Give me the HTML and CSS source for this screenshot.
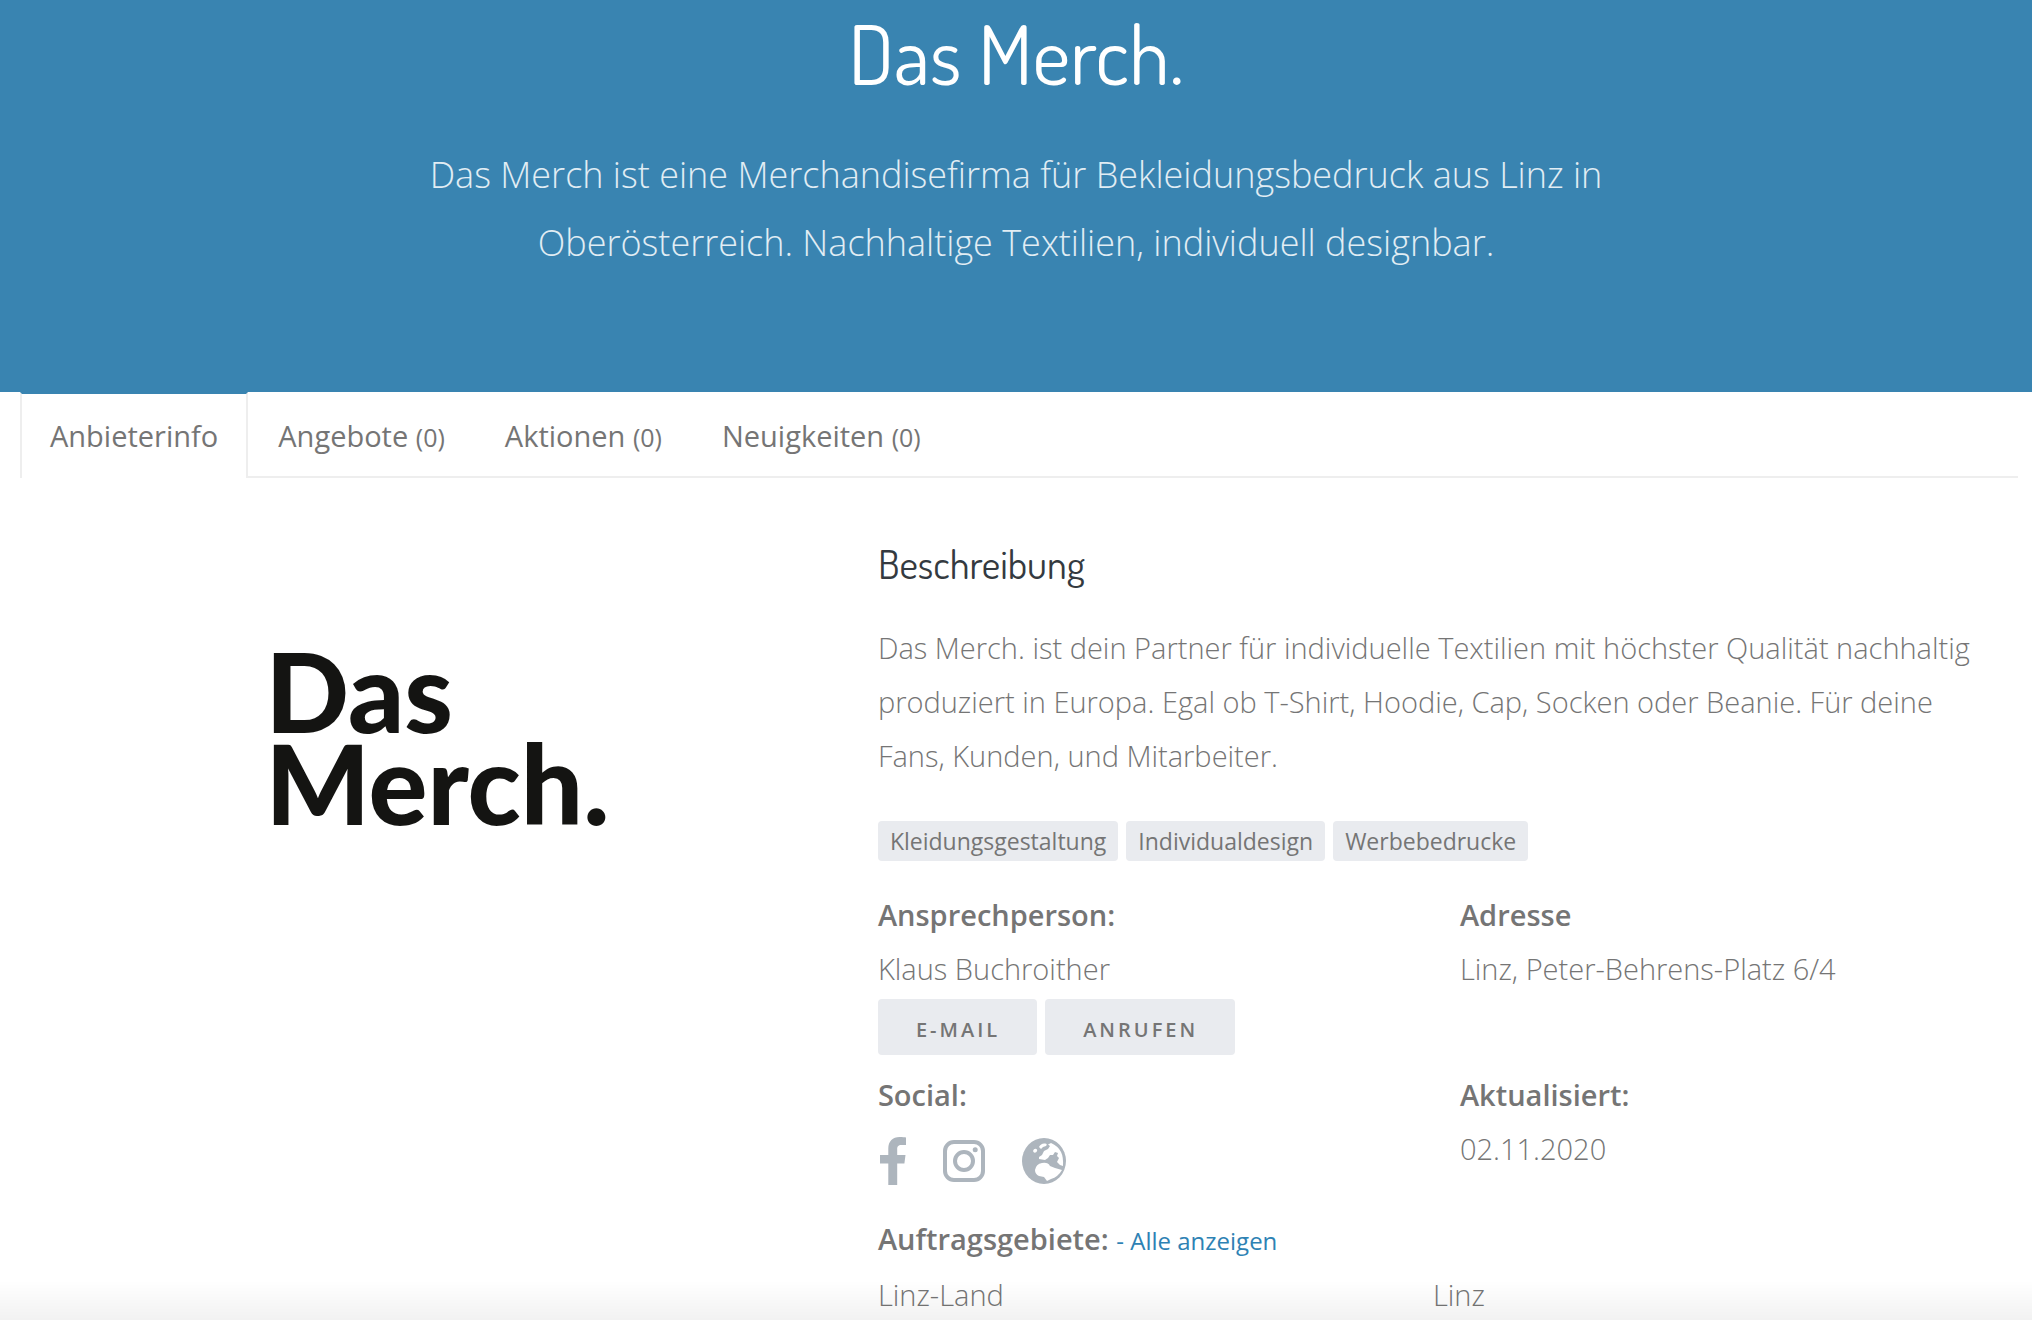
FILE: index.html
```html
<!DOCTYPE html>
<html lang="de">
<head>
  <meta charset="utf-8">
  <title>Das Merch.</title>
  <link rel="stylesheet" href="styles.css">
</head>
<body>
  <header class="hero">
    <h1>Das Merch.</h1>
    <p>Das Merch ist eine Merchandisefirma für Bekleidungsbedruck aus Linz in Oberösterreich. Nachhaltige Textilien, individuell designbar.</p>
  </header>

  <nav class="tabs">
    <a class="tab active" href="#info">Anbieterinfo</a>
    <a class="tab" href="#angebote">Angebote <small>(0)</small></a>
    <a class="tab" href="#aktionen">Aktionen <small>(0)</small></a>
    <a class="tab" href="#neuigkeiten">Neuigkeiten <small>(0)</small></a>
  </nav>

  <main class="content" id="info">
    <div class="logo-col">
      <div class="logo">Das<br>Merch.</div>
    </div>

    <div class="info-col">
      <h2>Beschreibung</h2>
      <p>Das Merch. ist dein Partner für individuelle Textilien mit höchster Qualität nachhaltig produziert in Europa. Egal ob T-Shirt, Hoodie, Cap, Socken oder Beanie. Für deine Fans, Kunden, und Mitarbeiter.</p>

      <div class="tags">
        <span class="tag">Kleidungsgestaltung</span>
        <span class="tag">Individualdesign</span>
        <span class="tag">Werbebedrucke</span>
      </div>

      <div class="details">
        <div>
          <strong>Ansprechperson:</strong>
          <div>Klaus Buchroither</div>
          <div class="buttons">
            <button type="button">E-Mail</button>
            <button type="button">Anrufen</button>
          </div>
        </div>
        <div>
          <strong>Adresse</strong>
          <div>Linz, Peter-Behrens-Platz 6/4</div>
        </div>
        <div>
          <strong>Social:</strong>
          <div class="social">
            <a href="#facebook" aria-label="Facebook">
              <svg width="26" height="48" viewBox="0 0 26 48"><path d="M26 0.500V8H21.500C18 8 17.200 9.700 17.200 12.200V18H25.500L24.400 26.500H17.200V48H8.300V26.500H0V18H8.300V11.500C8.300 4.200 12.800 0 19.500 0C22.500 0 25 0.200 26 0.500Z"/></svg>
            </a>
            <a href="#instagram" aria-label="Instagram">
              <svg width="42" height="42" viewBox="0 0 42 42"><rect class="line" x="2" y="2" width="38" height="38" rx="9"/><circle class="line" cx="21" cy="21" r="9"/><circle cx="32.200" cy="9.800" r="2.500"/></svg>
            </a>
            <a href="#website" aria-label="Webseite">
              <svg width="44" height="46" viewBox="0 0 44 46"><ellipse cx="22" cy="23" rx="22" ry="23"/><path class="land" d="M11 13Q12 10 14.500 11Q16 12 14.500 14Q12 16 11 13ZM17 9Q19 5 23 5.500Q26 6 24 8L21 9L19 11ZM26 6.500L29 5Q36 8 39 14Q41.500 19 41 28L38 27L35 24L37 20L35 18L36 15L33 14L31 17L28 17L26 20L23 22L17 21L17 19L20 17L22 13L26 11L28 8ZM13 32Q14 26 20 25Q26 24 28 28L33 30L40 32Q36 39 29 41L25 43L22 39L17 38Q13 36 13 32Z"/></svg>
            </a>
          </div>
        </div>
        <div>
          <strong>Aktualisiert:</strong>
          <div>02.11.2020</div>
        </div>
      </div>

      <strong>Auftragsgebiete:</strong> <a class="show-all" href="#gebiete">- Alle anzeigen</a>
      <ul class="areas" id="gebiete">
        <li>Linz-Land</li>
        <li>Linz</li>
      </ul>
    </div>
  </main>
</body>
</html>
```
FILE: styles.css
```css
* {
  box-sizing: border-box;
}
body {
  margin: 0;
  background: #fff;
  color: #757575;
  font-family: "Open Sans", sans-serif;
  font-size: 29px;
  font-weight: 300;
  line-height: 54px;
}
/* soft shade at the bottom of the window */
body::after {
  content: "";
  position: fixed;
  left: 0;
  right: 0;
  bottom: 0;
  height: 40px;
  background: linear-gradient(rgba(0, 0, 0, 0), rgba(0, 0, 0, 0.05));
  pointer-events: none;
}
h1, h2, p, ul {
  margin: 0;
}
h1, h2 {
  font-family: "Dosis", "Liberation Sans Narrow", "Open Sans", sans-serif;
  font-weight: 400;
}
strong {
  font-weight: 600;
}
a {
  color: #2e82b4;
  text-decoration: none;
}

.hero {
  padding: 5px 16px 115px;
  background: #3984b1;
  color: #fff;
  text-align: center;
}
.hero h1 {
  margin-bottom: 40px;
  font-size: 82px;
  line-height: 96px;
}
.hero p {
  max-width: 1240px;
  margin: 0 auto;
  color: #e1edf4;
  font-size: 36px;
  line-height: 68px;
}

.tabs {
  display: flex;
  margin: 0 14px 0 20px;
}
.tabs::after {
  content: "";
  flex: 1;
  border-bottom: 2px solid #eee;
}
.tab {
  padding: 18px 30px 14px;
  border-bottom: 2px solid #eee;
  color: #757575;
  font-weight: 400;
  line-height: 52px;
}
.tab small {
  font-size: 25px;
  line-height: 1;
}
.tab.active {
  padding: 16px 28px;
  border: solid #eee;
  border-width: 2px 2px 0;
  border-top-color: #3984b1;
}

.content {
  display: grid;
  grid-template-columns: 5fr 7fr;
  gap: 65px;
  padding: 59px 44px 0 20px;
}
.logo-col {
  display: flex;
  justify-content: center;
  padding: 107px 0 0 42px;
}
.logo {
  align-self: flex-start;
  color: #141412;
  font-family: Lato, sans-serif;
  font-size: 110px;
  font-weight: 900;
  line-height: 92px;
}
h2 {
  margin-bottom: 32px;
  color: #343a40;
  font-size: 40px;
  line-height: 52px;
}
.tags {
  display: flex;
  gap: 8px;
  margin: 38px 0 27px;
}
.tag {
  padding: 1px 12px 0;
  border-radius: 4px;
  background: #e9ebef;
  font-size: 23px;
  font-weight: 400;
  line-height: 39px;
}
.details {
  display: grid;
  grid-template-columns: 1fr 1fr;
  gap: 13px 54px;
  margin-bottom: 22px;
}
.buttons {
  display: flex;
  gap: 8px;
  margin-top: 3px;
}
button {
  height: 56px;
  padding: 4px 37px 0 38px;
  border: 0;
  border-radius: 4px;
  background: #e9ebef;
  color: #757575;
  font: 600 20px "Open Sans", sans-serif;
  letter-spacing: 3px;
  text-transform: uppercase;
}
.social {
  display: flex;
  align-items: center;
  gap: 37px;
  height: 68px;
  padding: 10px 0 0 2px;
}
.social a {
  display: flex;
}
.social svg {
  fill: #adb5bd;
}
.social .line {
  fill: none;
  stroke: #adb5bd;
  stroke-width: 4;
}
.social .land {
  fill: #fff;
}
.show-all {
  font-size: 24px;
  font-weight: 400;
}
.areas {
  display: grid;
  grid-template-columns: 1fr 1fr;
  padding: 0;
  list-style: none;
}
```
